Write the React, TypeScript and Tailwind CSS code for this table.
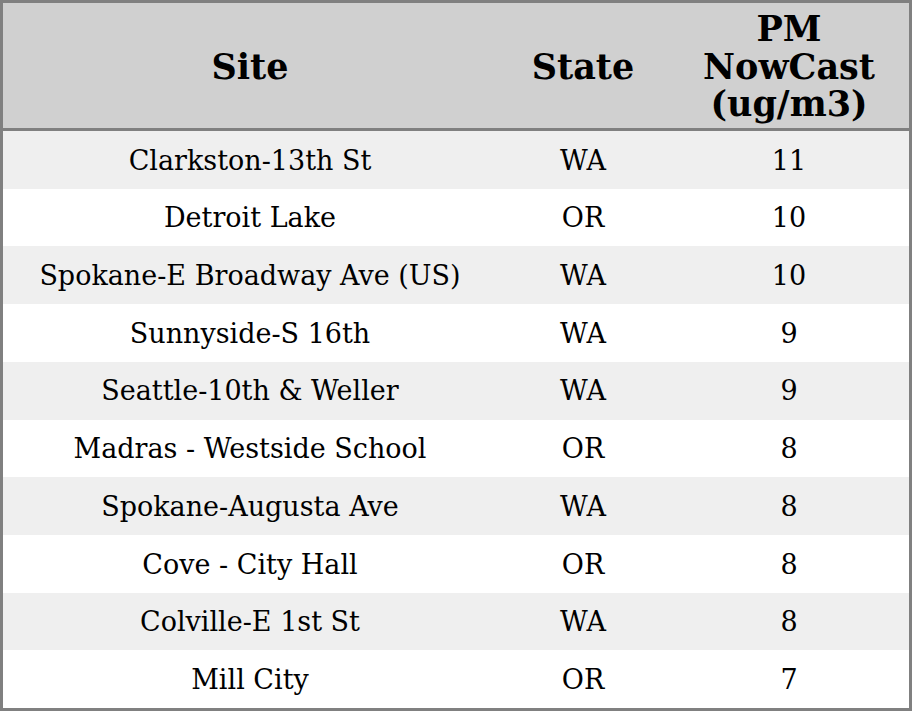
const rows: [string, string, number][] = [
  ["Clarkston-13th St", "WA", 11],
  ["Detroit Lake", "OR", 10],
  ["Spokane-E Broadway Ave (US)", "WA", 10],
  ["Sunnyside-S 16th", "WA", 9],
  ["Seattle-10th & Weller", "WA", 9],
  ["Madras - Westside School", "OR", 8],
  ["Spokane-Augusta Ave", "WA", 8],
  ["Cove - City Hall", "OR", 8],
  ["Colville-E 1st St", "WA", 8],
  ["Mill City", "OR", 7],
];

export default function App() {
  return (
    <div
      className="w-[912px] h-[711px] border-[3px] border-[#808080] flex flex-col bg-white text-black"
      style={{ fontFamily: '"DejaVu Serif", serif' }}
    >
      {/* header */}
      <div className="h-[128px] shrink-0 flex bg-[#d0d0d0] border-b-[3px] border-[#808080] font-bold text-[35px] leading-[37.5px]">
        <div className="w-[494px] flex items-center justify-center pt-[2px]">Site</div>
        <div className="w-[172px] flex items-center justify-center pt-[2px]">State</div>
        <div className="flex-1 flex items-center justify-center text-center pt-[2px]">
          PM
          <br />
          NowCast
          <br />
          (ug/m3)
        </div>
      </div>
      {rows.map((r, i) => (
        <div
          key={i}
          className={
            "flex-1 flex items-center text-[27px] pt-[2px] " +
            (i % 2 === 0 ? "bg-[#efefef]" : "bg-white")
          }
        >
          <div className="w-[494px] text-center">{r[0]}</div>
          <div className="w-[172px] text-center">{r[1]}</div>
          <div className="flex-1 text-center">{r[2]}</div>
        </div>
      ))}
    </div>
  );
}
